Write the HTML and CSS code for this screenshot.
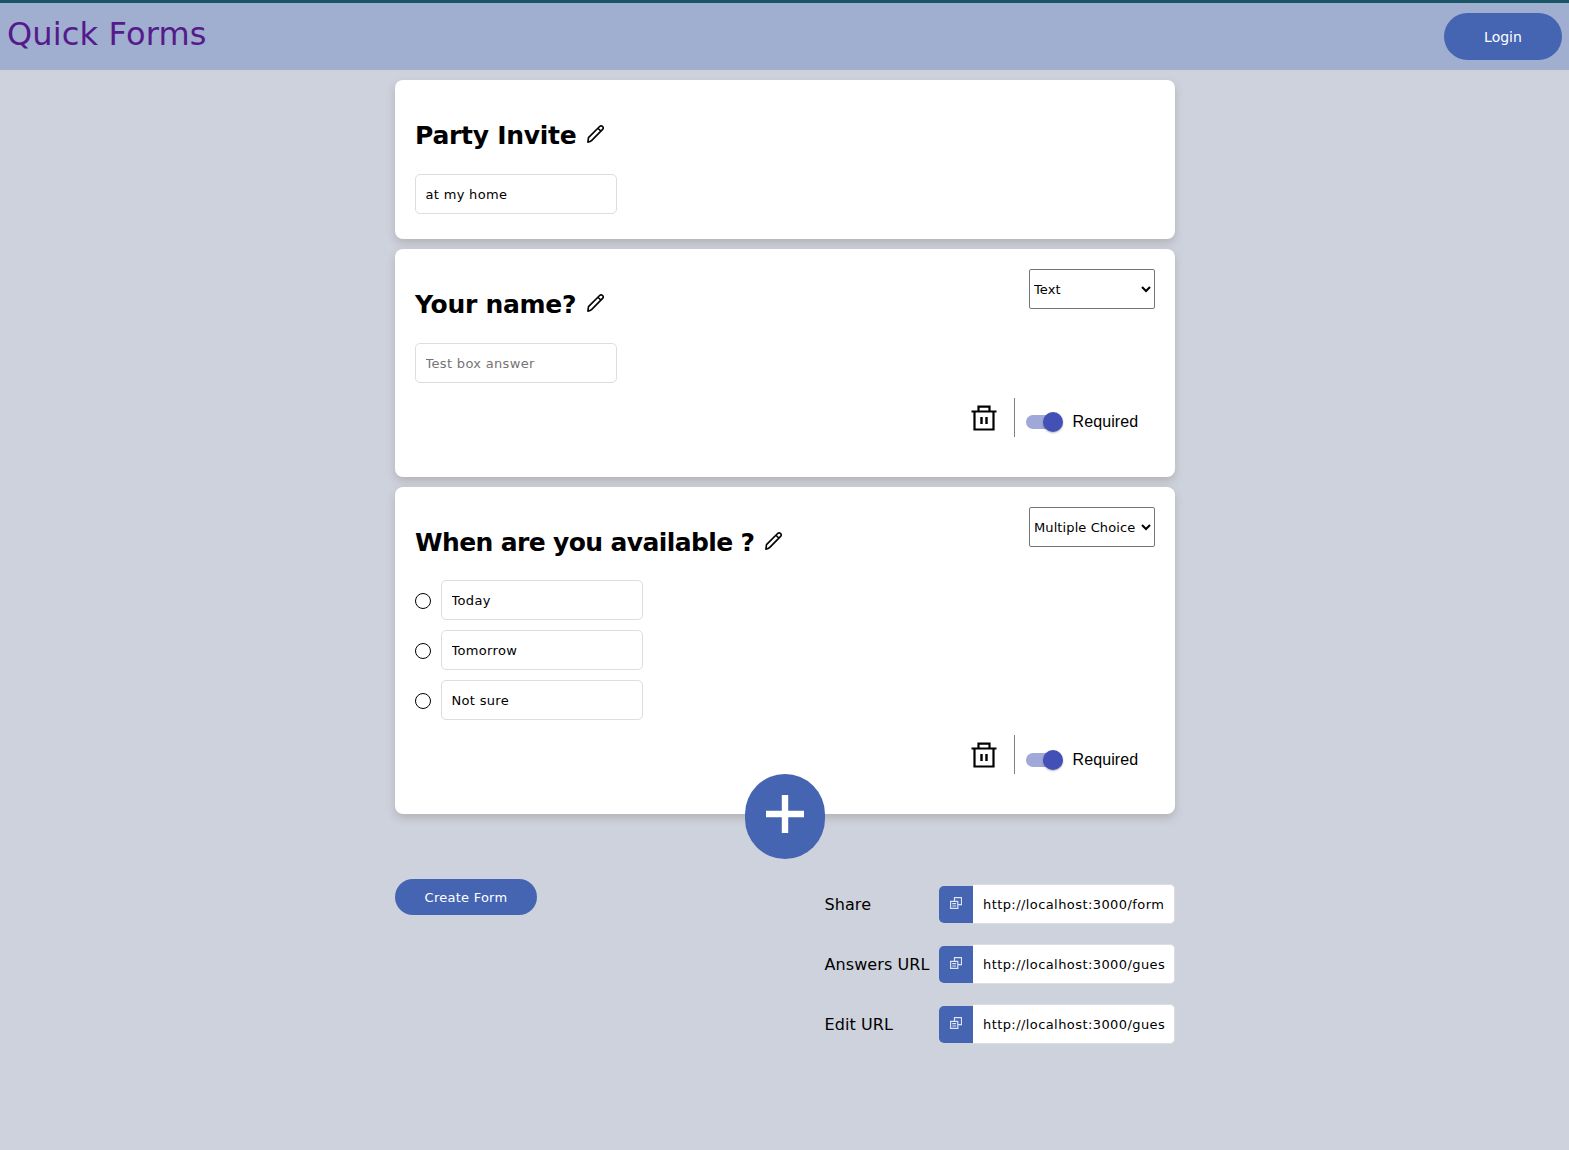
FILE: index.html
```html
<!DOCTYPE html>
<html lang="en">
<head>
<meta charset="utf-8">
<title>Quick Forms</title>
<link rel="stylesheet" href="styles.css">
</head>
<body>
<svg width="0" height="0" class="defs">
  <symbol id="pencil" viewBox="0 0 18 18"><path d="M.9 17.1 1.5 12.6 12.6 1.5q1.5-1.3 3 0 1.3 1.4 0 2.9L4.8 15.4q-1.4 1.5-3.9 1.7ZM11 3.2l3 3" fill="none" stroke="currentColor" stroke-width="1.6" stroke-linejoin="round"/></symbol>
  <symbol id="trash" viewBox="0 0 26 26"><path d="M.5 6.5h25M3.5 7v17.500h19V7M7.500 6V1.700h11V6" fill="none" stroke="currentColor" stroke-width="2.200"/><path d="M10.500 12v7M15.500 12v7" stroke="currentColor" stroke-width="2.400"/></symbol>
  <symbol id="copy" viewBox="0 0 12 12"><path d="M4.500 4V.6h7v7H8.200M.6 4.300h7.200v7H.6zM2.300 6.600h3.800M2.300 9h3.800" fill="none" stroke="currentColor" stroke-width="1.200"/></symbol>
</svg>
<header class="header">
  <a class="brand">Quick Forms</a>
  <button class="btn login">Login</button>
</header>
<main class="form">
  <section class="card intro">
    <h2 class="title"><span>Party Invite</span><svg class="pencil"><use href="#pencil"/></svg></h2>
    <input class="field" value="at my home">
  </section>
  <section class="card question">
    <div class="top">
      <h2 class="title"><span>Your name?</span><svg class="pencil"><use href="#pencil"/></svg></h2>
      <select class="kind"><option>Text</option></select>
    </div>
    <input class="field" placeholder="Test box answer">
    <div class="actions">
      <svg class="trash"><use href="#trash"/></svg>
      <span class="divider"></span>
      <label class="switch"><span class="track"><span class="knob"></span></span>Required</label>
    </div>
  </section>
  <section class="card choices">
    <div class="top">
      <h2 class="title long"><span>When are you available ?</span><svg class="pencil"><use href="#pencil"/></svg></h2>
      <select class="kind"><option>Multiple Choice</option></select>
    </div>
    <div class="options">
      <div class="option"><span class="radio"></span><input class="field" value="Today"></div>
      <div class="option"><span class="radio"></span><input class="field" value="Tomorrow"></div>
      <div class="option"><span class="radio"></span><input class="field" value="Not sure"></div>
    </div>
    <div class="actions">
      <svg class="trash"><use href="#trash"/></svg>
      <span class="divider"></span>
      <label class="switch low"><span class="track"><span class="knob"></span></span>Required</label>
    </div>
  </section>
  <button class="add" aria-label="Add question"><svg width="38" height="38" viewBox="0 0 38 38"><path d="M19 0v38M0 19h38" stroke="#fff" stroke-width="6.400"/></svg></button>
  <div class="bottom">
    <button class="btn create">Create Form</button>
    <div class="links">
      <div class="link"><span class="label">Share</span><button class="copy" aria-label="Copy"><svg><use href="#copy"/></svg></button><input class="field url" value="http://localhost:3000/form"></div>
      <div class="link"><span class="label">Answers URL</span><button class="copy" aria-label="Copy"><svg><use href="#copy"/></svg></button><input class="field url" value="http://localhost:3000/guest"></div>
      <div class="link"><span class="label">Edit URL</span><button class="copy" aria-label="Copy"><svg><use href="#copy"/></svg></button><input class="field url" value="http://localhost:3000/guest"></div>
    </div>
  </div>
</main>
</body>
</html>
```
FILE: styles.css
```css
* { box-sizing: border-box; }
body {
  margin: 0;
  min-height: 1150px;
  background: #ced2dd;
  font-family: "DejaVu Sans", sans-serif;
  color: #000;
}
.defs { display: none; }
button, input, select { font-family: inherit; margin: 0; }
.header {
  height: 70px;
  border-top: 3px solid #1a5565;
  background: #a0aecf;
  display: flex;
  justify-content: space-between;
  align-items: flex-start;
  padding: 10px 7px 0 7px;
}
.brand { font-size: 32px; line-height: 42px; color: #551a8b; letter-spacing: 0.15px; }
.btn { border: 0; color: #fff; background: #4565b2; padding: 0; }
.login { width: 118px; height: 47px; border-radius: 25px; font-size: 14px; }
.form { width: 780px; margin: 10px 0 0 395px; }
.card {
  background: #fff;
  border-radius: 8px;
  box-shadow: 0 4px 8px rgba(120, 110, 90, 0.3);
  padding: 20px;
  margin-bottom: 10px;
}
.intro { height: 159px; }
.question { height: 228px; }
.choices { height: 327px; margin-bottom: 0; }
.title {
  display: flex;
  align-items: center;
  margin: 0;
  height: 74px;
  padding-bottom: 3px;
  font-size: 25px;
  line-height: 30px;
  letter-spacing: -0.27px;
  white-space: nowrap;
}
.long { letter-spacing: -0.62px; }
.top { display: flex; justify-content: space-between; align-items: flex-start; }
.pencil { width: 18px; height: 18px; margin: -4px 0 0 11px; }
.field {
  display: block;
  width: 202px;
  height: 40px;
  border: 1px solid #ddd;
  border-radius: 5px;
  padding: 0 9px 0 9.5px;
  font-size: 13px;
  letter-spacing: 0.32px;
  background: #fff;
  color: #000;
}
.field::placeholder { color: #757575; }
.kind {
  width: 126px;
  height: 40px;
  border: 1px solid #767676;
  border-radius: 2px;
  font-size: 13px;
  letter-spacing: 0.1px;
  background: #fff;
  color: #000;
  padding: 0 1px 0 0;
}
.options { display: flex; flex-direction: column; gap: 10px; margin-top: -1px; }
.option { display: flex; align-items: center; gap: 10px; }
.radio { width: 16px; height: 16px; border: 1.300px solid #000; border-radius: 50%; margin-top: 2px; }
.actions { display: flex; justify-content: flex-end; align-items: flex-start; height: 39px; margin-top: 15px; padding-right: 16px; }
.trash { width: 26px; height: 26px; margin: 7px 17px 0 0; }
.divider { width: 1px; height: 39px; background: #808080; }
.switch {
  display: flex;
  align-items: center;
  height: 20px;
  width: 124px;
  margin-top: 14px;
  padding-left: 11px;
  font: 16px/20px "Liberation Sans", sans-serif;
  letter-spacing: 0.1px;
}
.low { margin-top: 15px; }
.track { display: flex; align-items: center; justify-content: flex-end; width: 34px; height: 14px; border-radius: 7px; background: #a0a8da; margin-right: 12.5px; }
.knob { flex: none; width: 20px; height: 20px; margin-right: -3px; border-radius: 50%; background: #4350b5; box-shadow: 0 1px 2px rgba(0, 0, 0, 0.3); }
.add {
  display: flex;
  justify-content: center;
  position: relative;
  width: 80px;
  height: 85px;
  margin: -40px auto 0;
  padding: 21px 0 0;
  border: 0;
  border-radius: 40px;
  background: #4565b2;
  align-items: flex-start;
}
.bottom { display: flex; justify-content: space-between; align-items: flex-start; margin-top: 20px; }
.create { width: 142px; height: 36px; border-radius: 18px; font-size: 13px; letter-spacing: 0.25px; }
.links { display: flex; flex-direction: column; gap: 20px; margin-top: 5px; }
.link { display: flex; align-items: center; height: 40px; }
.label { width: 115px; font-size: 16px; line-height: 20px; padding: 2px 0 0 0.5px; letter-spacing: 0.08px; white-space: nowrap; }
.copy { display: flex; justify-content: center; width: 34px; height: 37px; padding: 11px 0 0; margin-top: 1px; border: 0; border-radius: 5px 0 0 5px; background: #4565b2; color: #dce4f5; }
.copy svg { width: 12px; height: 12px; }
.url { border-radius: 0 5px 5px 0; border-left: 0; padding-left: 10px; letter-spacing: 0.42px; }
```
